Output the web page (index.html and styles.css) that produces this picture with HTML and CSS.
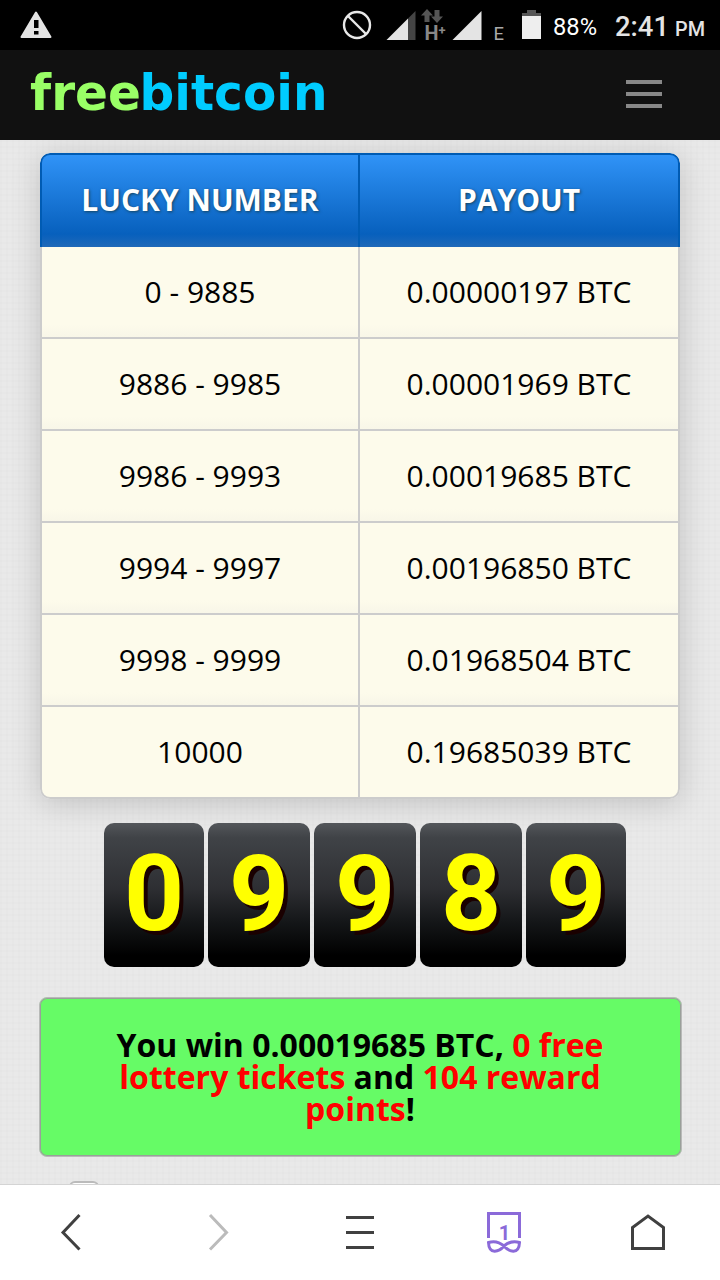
FILE: index.html
```html
<!DOCTYPE html>
<html lang="en">
<head>
    <meta charset="UTF-8">
    <meta name="viewport" content="width=device-width, initial-scale=1.0">
    <title>FreeBitcoin</title>
    <link rel="stylesheet" href="styles.css">
</head>
<body>

    <!-- Phone status bar -->
    <div class="status-bar">
        <svg class="status-icons" width="720" height="50" viewBox="0 0 720 50">
            <path fill="#e4e4e4" stroke="#e4e4e4" stroke-width="2" stroke-linejoin="round" d="M36 12.5L50.5 37h-29z"/>
            <path fill="#000" d="M34 20h4.500v8H34zM34 31h4.500v3.500H34z"/>
            <g fill="none" stroke="#e8e8e8" stroke-width="2.4">
                <circle cx="357" cy="25" r="13"/>
                <path d="M348 16l18 18"/>
            </g>
            <path fill="#444" d="M408 18.500L415.500 11v29H408z"/>
            <path fill="#e4e4e4" d="M386.500 40L408 18.500V40z"/>
            <path fill="#555" d="M427 9l6 6.500h-3.500V22h-5v-6.500H421zM437 23l-6-6.500h3.500V10h5v6.500H443z"/>
            <path fill="#e4e4e4" d="M452.500 40L481.500 11v29z"/>
            <path fill="#555" d="M527 10h9v3h5v4h-19v-4h5z"/>
            <path fill="#eee" d="M522 16h19v23h-19z"/>
            <text class="net-h" x="424.500" y="40" textLength="14" lengthAdjust="spacingAndGlyphs">H</text>
            <text class="net-plus" x="438.500" y="35">+</text>
            <text class="net-e" x="493.500" y="40" textLength="10.500" lengthAdjust="spacingAndGlyphs">E</text>
            <text class="battery" x="553" y="34.500" textLength="44" lengthAdjust="spacingAndGlyphs">88%</text>
            <text class="clock" x="615" y="36" textLength="54" lengthAdjust="spacingAndGlyphs">2:41</text>
            <text class="clock-pm" x="675" y="36" textLength="30" lengthAdjust="spacingAndGlyphs">PM</text>
        </svg>
    </div>

    <div class="header">
        <svg class="logo" width="296" height="50" viewBox="0 0 296 50">
            <text class="logo-free" x="0" y="40" textLength="111" lengthAdjust="spacingAndGlyphs">free</text>
            <text class="logo-bitcoin" x="109.500" y="40" textLength="188" lengthAdjust="spacingAndGlyphs">bitcoin</text>
        </svg>
        <div class="menu-btn">
            <span></span>
            <span></span>
            <span></span>
        </div>
    </div>

    <div class="content">
        <div class="payout-table">
            <div class="table-head">
                <div class="cell">LUCKY NUMBER</div>
                <div class="cell">PAYOUT</div>
            </div>
            <div class="table-row">
                <div class="cell">0 - 9885</div>
                <div class="cell">0.00000197 BTC</div>
            </div>
            <div class="table-row">
                <div class="cell">9886 - 9985</div>
                <div class="cell">0.00001969 BTC</div>
            </div>
            <div class="table-row">
                <div class="cell">9986 - 9993</div>
                <div class="cell">0.00019685 BTC</div>
            </div>
            <div class="table-row">
                <div class="cell">9994 - 9997</div>
                <div class="cell">0.00196850 BTC</div>
            </div>
            <div class="table-row">
                <div class="cell">9998 - 9999</div>
                <div class="cell">0.01968504 BTC</div>
            </div>
            <div class="table-row">
                <div class="cell">10000</div>
                <div class="cell">0.19685039 BTC</div>
            </div>
        </div>

        <!-- Rolled number -->
        <div class="digits">
            <div class="digit">0</div>
            <div class="digit">9</div>
            <div class="digit">9</div>
            <div class="digit">8</div>
            <div class="digit">9</div>
        </div>

        <div class="win-message">
            <p>You win 0.00019685 BTC, <span class="red">0 free lottery tickets</span> and <span class="red">104 reward points</span>!</p>
        </div>

        <div class="checkbox"></div>
    </div>

    <!-- Browser toolbar -->
    <div class="toolbar">
        <div class="tool">
            <svg width="40" height="48" viewBox="0 0 40 48"><path class="line" d="M27.500 7L11 24.500L27.500 41.500"/></svg>
        </div>
        <div class="tool">
            <svg width="40" height="48" viewBox="0 0 40 48"><path class="line disabled" d="M14 7L30.500 24.500L14 41.500"/></svg>
        </div>
        <div class="tool">
            <svg width="40" height="48" viewBox="0 0 40 48"><path class="line" d="M6 9.500h28M6 24.500h28M6 39.500h28"/></svg>
        </div>
        <div class="tool">
            <svg width="40" height="48" viewBox="0 0 40 48">
                <path class="line purple" d="M4.500 30V5.500h31V30"/>
                <path class="line purple" d="M4.500 34.500C11 32.500 16 34.500 20 38C24 34.500 29 32.500 35.500 34.500C35 47 25 44 20 38C15 44 5 47 4.500 34.500z"/>
                <text class="tab-count" x="20.500" y="32" text-anchor="middle">1</text>
            </svg>
        </div>
        <div class="tool">
            <svg width="40" height="48" viewBox="0 0 40 48"><path class="line" d="M4.500 40.500V19.500L20 8L35.500 19.500V40.500z"/></svg>
        </div>
    </div>

</body>
</html>
```
FILE: styles.css
```css
* {
    margin: 0;
    padding: 0;
    box-sizing: border-box;
}

body {
    width: 720px;
    height: 1280px;
    overflow: hidden;
    display: flex;
    flex-direction: column;
    font-family: "Open Sans", "Noto Sans", sans-serif;
    background: #e9e9e9;
}

.status-bar {
    height: 50px;
    background: #000;
}

.status-icons {
    display: block;
    font-family: Roboto, sans-serif;
    fill: #e4e4e4;
}

.net-h {
    font-size: 20px;
    font-weight: bold;
    fill: #888;
}

.net-plus {
    font-size: 13px;
    font-weight: bold;
    fill: #888;
}

.net-e {
    font-size: 19px;
    fill: #aaa;
}

.battery {
    font-size: 24.5px;
    fill: #fff;
}

.clock {
    font-size: 28px;
    font-weight: 500;
}

.clock-pm {
    font-size: 20px;
    font-weight: 500;
}

.header {
    height: 90px;
    padding: 0 58px 0 30px;
    display: flex;
    align-items: center;
    justify-content: space-between;
    background: #111;
}

.logo {
    overflow: visible;
    font-family: "DejaVu Sans", sans-serif;
    font-size: 49px;
    font-weight: bold;
}

.logo-free {
    fill: #99ff66;
}

.logo-bitcoin {
    fill: #00ccff;
}

.menu-btn {
    width: 36px;
    display: flex;
    flex-direction: column;
    gap: 8px;
    margin-top: -2px;
}

.menu-btn span {
    height: 4px;
    background: #888;
}

.content {
    flex: 1;
    min-height: 0;
    overflow: hidden;
    display: flex;
    flex-direction: column;
    align-items: center;
    padding-top: 13px;
    background-color: #e9e9e9;
    background-image: linear-gradient(rgba(0, 0, 0, 0.006) 2px, transparent 2px),
        linear-gradient(90deg, rgba(0, 0, 0, 0.006) 2px, transparent 2px);
    background-size: 6px 6px;
}

.payout-table {
    width: 640px;
    height: 646px;
    flex-shrink: 0;
    border-radius: 10px;
    overflow: hidden;
    box-shadow: 0 4px 30px rgba(0, 0, 0, 0.17);
    font-size: 30px;
    text-align: center;
}

.table-head,
.table-row {
    display: grid;
    grid-template-columns: 320px 320px;
}

.cell {
    height: 92px;
    line-height: 90px;
    border-right: 2px solid #ccc;
    border-bottom: 2px solid #ccc;
    color: #000;
    background: linear-gradient(#fdfbeb 86%, #f8f6e8);
}

.cell:first-child {
    border-left: 2px solid #ccc;
}

.table-row:last-child .cell {
    background: #fdfbeb;
}

.table-head .cell {
    height: 94px;
    line-height: 90px;
    border: 2px solid #005bb3;
    border-left: none;
    border-bottom: none;
    color: #fff;
    font-weight: bold;
    text-shadow: 1px 1px 3px #14445e;
    background: linear-gradient(#3093f7, #0760bd 86%, #2069b8);
}

.table-head .cell:first-child {
    border-left: 2px solid #005bb3;
    border-top-left-radius: 10px;
}

.table-head .cell:last-child {
    border-top-right-radius: 10px;
}

.table-row:last-child .cell:first-child {
    border-bottom-left-radius: 10px;
}

.table-row:last-child .cell:last-child {
    border-bottom-right-radius: 10px;
}

.digits {
    display: flex;
    gap: 4px;
    margin-top: 24px;
    margin-left: 10px;
}

.digit {
    width: 102px;
    height: 144px;
    line-height: 144px;
    border-radius: 10px;
    background: linear-gradient(#54575b, #404347 10%, #2e2f33 45%, #151719 68%, #000 92%);
    color: #ff0;
    font-family: Roboto, sans-serif;
    font-size: 105px;
    font-weight: bold;
    text-align: center;
    text-shadow: 4px 4px 0 #1a0000;
}

.digit:first-child,
.digit:last-child {
    width: 100px;
}

.win-message {
    width: 643px;
    height: 160px;
    flex-shrink: 0;
    margin-top: 30px;
    padding: 30px 60px 0;
    border: 1px solid #b8bab8;
    border-radius: 8px;
    box-shadow: inset 0 0 0 1px #9a9f9a;
    background: #66fb66;
    font-size: 32px;
    font-weight: bold;
    line-height: 32px;
    text-align: center;
}

.win-message p {
    padding-top: 1px;
}

.red {
    color: #f00;
}

.checkbox {
    width: 30px;
    height: 30px;
    flex-shrink: 0;
    align-self: flex-start;
    margin: 24px 0 0 69px;
    border: 2px solid #bbb;
    border-radius: 6px;
    background: #fff;
}

.toolbar {
    height: 96px;
    flex-shrink: 0;
    display: grid;
    grid-template-columns: repeat(5, 1fr);
    align-items: center;
    justify-items: center;
    padding-bottom: 2px;
    border-top: 1px solid #d4d4d4;
    background: #fff;
}

.tool svg {
    display: block;
}

.line {
    fill: none;
    stroke: #404040;
    stroke-width: 3;
}

.disabled {
    stroke: #bbb;
}

.purple {
    stroke: #8b6ad9;
}

.tab-count {
    font-family: Roboto, sans-serif;
    font-size: 20px;
    font-weight: bold;
    fill: #8b6ad9;
}
```
